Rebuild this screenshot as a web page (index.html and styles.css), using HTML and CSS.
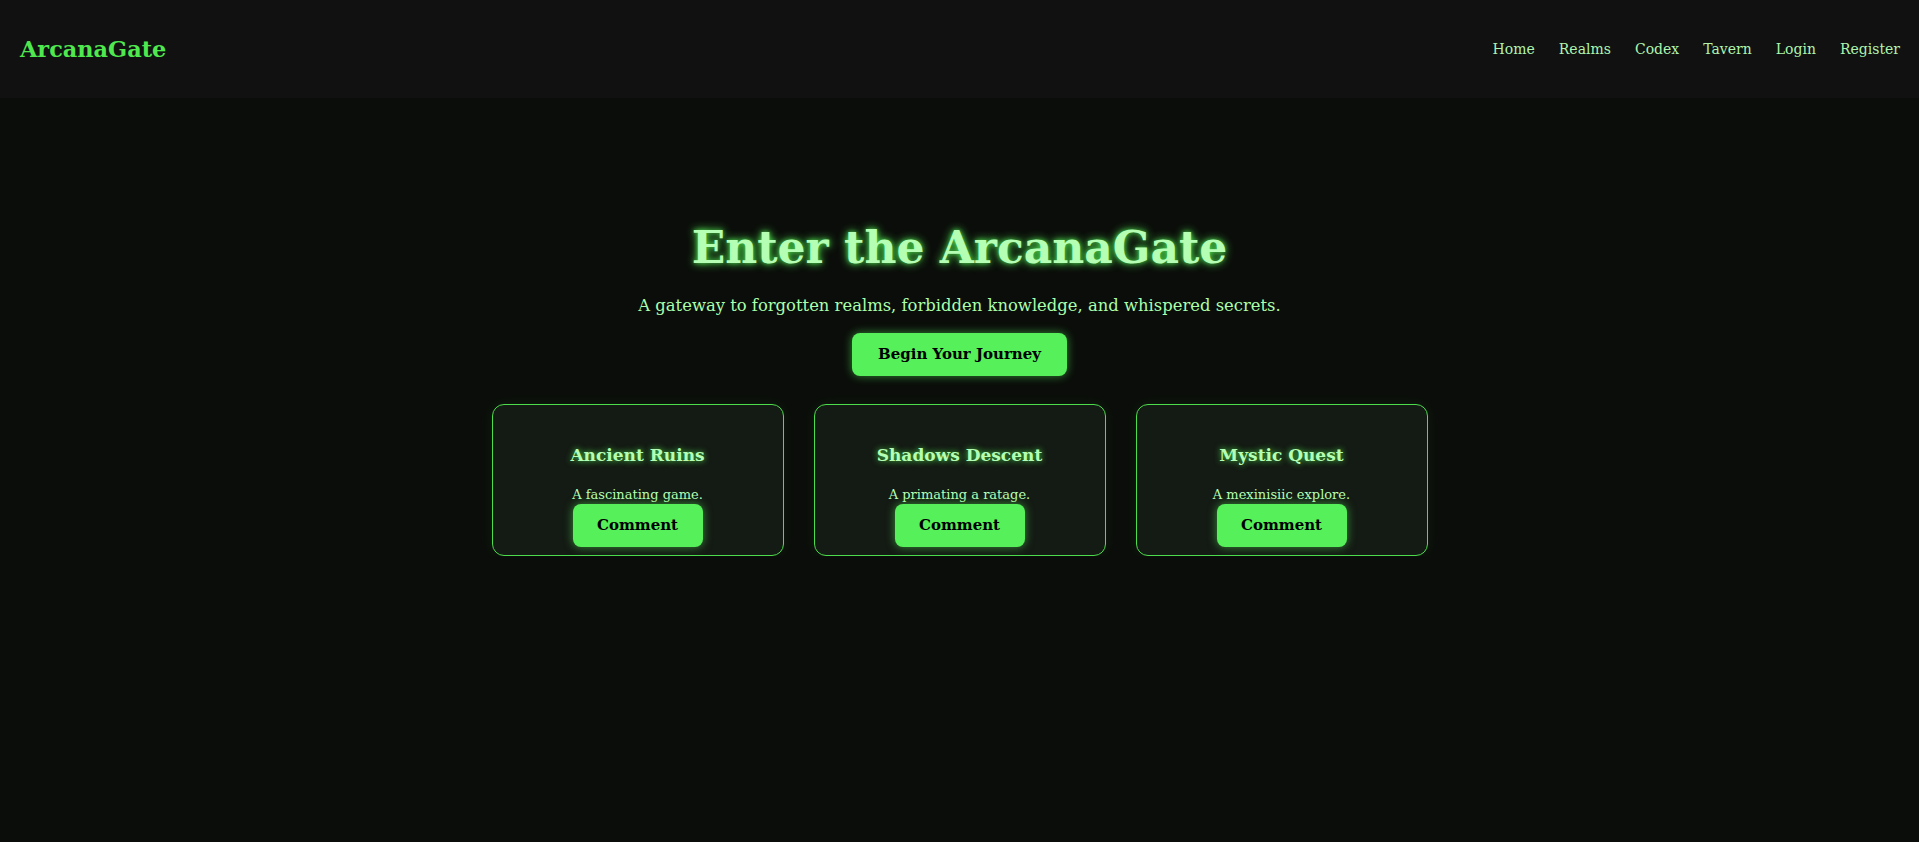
FILE: index.html
```html
<!DOCTYPE html>
<html lang="en">
<head>
<meta charset="utf-8">
<title>ArcanaGate</title>
<link rel="stylesheet" href="styles.css">
</head>
<body>
<header class="site-header">
  <div class="logo">ArcanaGate</div>
  <nav class="nav">
    <a href="#">Home</a>
    <a href="#">Realms</a>
    <a href="#">Codex</a>
    <a href="#">Tavern</a>
    <a href="#">Login</a>
    <a href="#">Register</a>
  </nav>
</header>
<main class="hero">
  <h1 class="hero-title">Enter the ArcanaGate</h1>
  <p class="hero-sub">A gateway to forgotten realms, forbidden knowledge, and whispered secrets.</p>
  <button class="btn btn-hero">Begin Your Journey</button>
  <section class="cards">
    <article class="card">
      <h3 class="card-title">Ancient Ruins</h3>
      <p class="card-desc">A fascinating game.</p>
      <button class="btn btn-card">Comment</button>
    </article>
    <article class="card">
      <h3 class="card-title">Shadows Descent</h3>
      <p class="card-desc">A primating a ratage.</p>
      <button class="btn btn-card">Comment</button>
    </article>
    <article class="card">
      <h3 class="card-title">Mystic Quest</h3>
      <p class="card-desc">A mexinisiic explore.</p>
      <button class="btn btn-card">Comment</button>
    </article>
  </section>
</main>
</body>
</html>
```

FILE: styles.css
```css
* { box-sizing: border-box; }

html, body {
  margin: 0;
  padding: 0;
  background: #0b0d0a;
  font-family: Georgia, "DejaVu Serif", serif;
  color: #aaffaa;
}

.site-header {
  height: 98px;
  background: #111111;
  display: flex;
  align-items: center;
  justify-content: space-between;
  padding: 0 19px 0 20px;
}

.logo {
  font-size: 22.4px;
  font-weight: bold;
  color: #4fe84f;
}

.nav {
  display: flex;
  gap: 24px;
}

.nav a {
  color: #aef5ae;
  text-decoration: none;
  font-size: 14px;
}

.hero {
  display: flex;
  flex-direction: column;
  align-items: center;
  text-align: center;
  padding-top: 124px;
}

.hero-title {
  margin: 0;
  font-size: 44px;
  font-weight: bold;
  color: #b4ffb4;
  text-shadow: 0 0 10px #4ee84e, 0 0 4px #3c9c3c;
}

.hero-sub {
  margin: 22.5px 0 18px;
  font-size: 16.4px;
  color: #aaffaa;
}

.btn {
  font-family: inherit;
  font-weight: bold;
  color: #000;
  background: #55f05a;
  border: none;
  border-radius: 8px;
  box-shadow: 0 0 10px rgba(85, 240, 90, 0.55);
  cursor: pointer;
}

.btn-hero {
  height: 43px;
  padding: 0 26px;
  font-size: 15px;
}

.cards {
  display: flex;
  gap: 30px;
  margin-top: 28px;
}

.card {
  width: 292px;
  background: #141a14;
  border: 1px solid #4cdc4c;
  border-radius: 12px;
  padding: 21px 16px 8px;
  display: flex;
  flex-direction: column;
  align-items: center;
  box-shadow: 0 0 14px rgba(85, 240, 90, 0.08);
}

.card-title {
  margin: 19px 0 0;
  font-size: 17px;
  font-weight: bold;
  color: #b4ffb4;
  text-shadow: 0 0 6px #4ee84e;
}

.card-desc {
  margin: 22px 0 2px;
  font-size: 13px;
  color: #b4ffb4;
}

.btn-card {
  width: 130px;
  height: 43px;
  font-size: 15px;
}
```
